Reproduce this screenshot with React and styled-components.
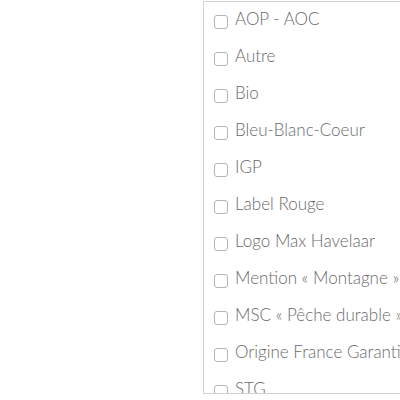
import React from 'react';
import styled, { createGlobalStyle } from 'styled-components';

const GlobalStyle = createGlobalStyle`
    body {
        margin: 0;
        background: #fff;
        font-family: "Lato", "Open Sans", sans-serif;
    }
`;

const Page = styled.div`
    width: 400px;
    height: 400px;
    overflow: hidden;
    padding-left: 203px;
    padding-top: 1px;
    box-sizing: border-box;
`;

const ListBox = styled.div`
    width: 260px;
    height: 393px;
    border: 1px solid #d2d2d2;
    box-sizing: border-box;
    overflow: hidden;
    padding: 0 0 0 10px;
`;

const Row = styled.label`
    display: flex;
    align-items: center;
    height: 37px;
    gap: 7px;
    color: #6a6a6a;
    font-size: 17px;
    font-weight: 300;
    white-space: nowrap;
`;

const Box = styled.span`
    flex: none;
    width: 12px;
    height: 12px;
    margin-top: 2px;
    border: 1px solid #b5b5b5;
    border-radius: 3px;
    background: #fff;
`;

const Text = styled.span`
    padding-bottom: 4px;
`;

const labels = [
    'AOP - AOC',
    'Autre',
    'Bio',
    'Bleu-Blanc-Coeur',
    'IGP',
    'Label Rouge',
    'Logo Max Havelaar',
    'Mention « Montagne »',
    'MSC « Pêche durable »',
    'Origine France Garantie',
    'STG',
];

export default function App() {
    return (
        <>
            <GlobalStyle />
            <Page>
                <ListBox>
                    {labels.map((l) => (
                        <Row key={l}>
                            <Box />
                            <Text>{l}</Text>
                        </Row>
                    ))}
                </ListBox>
            </Page>
        </>
    );
}
